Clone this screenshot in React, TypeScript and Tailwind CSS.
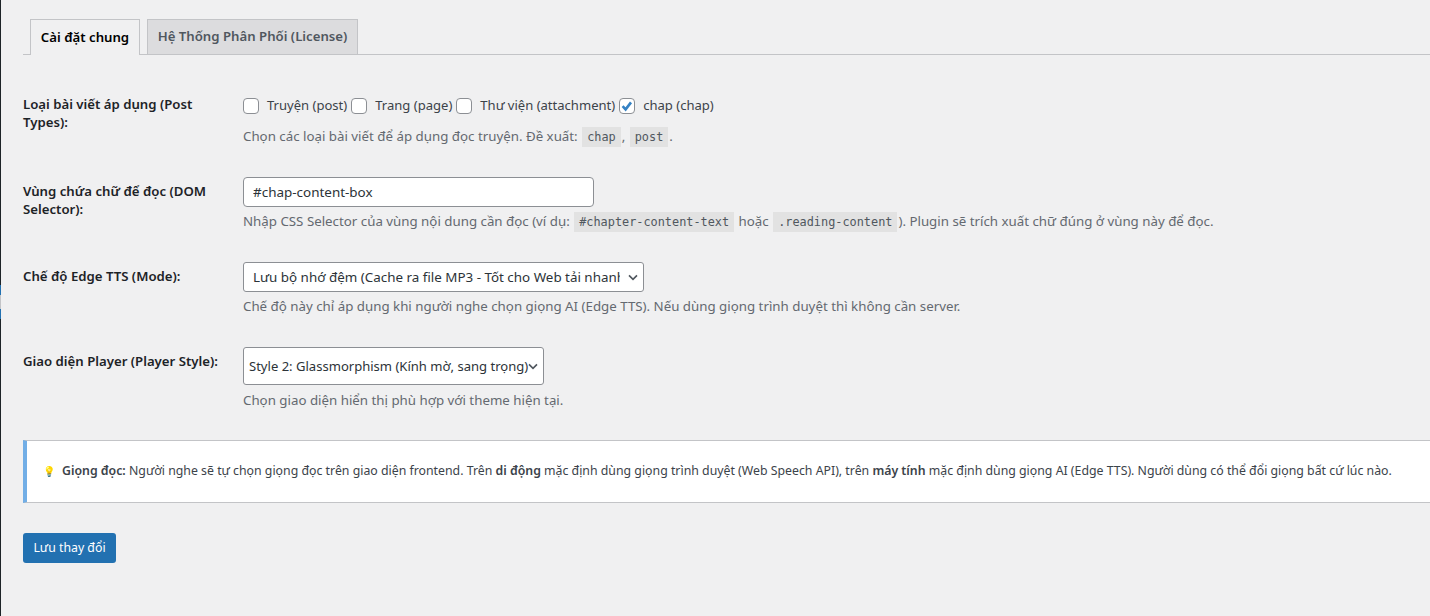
const codeClass =
  'bg-[#e2e2e2] px-[5px] py-[3px] mx-px font-["DejaVu_Sans_Mono",monospace] text-[11.86px] text-[#50575e]';

function Code({ children }: { children: string }) {
  return <code className={codeClass}>{children}</code>;
}

function Check({ label, checked }: { label: string; checked?: boolean }) {
  return (
    <label className="inline-flex items-center">
      <span className="relative mr-[8px] block h-4 w-4 rounded-[4px] border border-[#8c8f94] bg-white">
        {checked && (
          <svg viewBox="0 0 16 16" className="absolute left-[-1px] top-[-1px] h-4 w-4">
            <path d="M3.6 8.2l3 3.2 5.4-7" fill="none" stroke="#3582c4" strokeWidth="2.6" />
          </svg>
        )}
      </span>
      {label}
    </label>
  );
}

function Chevron() {
  return (
    <svg viewBox="0 0 20 20" className="pointer-events-none absolute right-[3px] top-1/2 h-4 w-4 -translate-y-1/2">
      <path d="M5 8l5 5 5-5" fill="none" stroke="#50575e" strokeWidth="2" />
    </svg>
  );
}

function Row({
  label,
  help,
  children,
  rowClass,
  labelClass,
}: {
  label: string;
  help: React.ReactNode;
  children: React.ReactNode;
  rowClass: string;
  labelClass: string;
}) {
  return (
    <div className={`flex ${rowClass}`}>
      <div className={`w-[220px] pr-4 text-[13.2px] leading-[18.2px] font-semibold text-[#1d2327] ${labelClass}`}>
        {label}
      </div>
      <div className="flex-1">
        {children}
        <p className="text-[13.3px] leading-[18px] text-[#646970] whitespace-nowrap">{help}</p>
      </div>
    </div>
  );
}

export default function App() {
  return (
    <div className='flex h-[616px] w-[1430px] overflow-hidden bg-[#f0f0f1] font-["Noto_Sans",sans-serif] text-[13px] text-[#3c434a]'>
      {/* Admin menu edge */}
      <div className="flex w-px shrink-0 flex-col">
        <div className="h-[285px] bg-[#1d2327]" />
        <div className="h-[10px] bg-[#2271b1]" />
        <div className="h-[14px] bg-[#c3c4c7]" />
        <div className="h-[10px] bg-[#2271b1]" />
        <div className="flex-1 bg-[#1d2327]" />
      </div>

      <div className="min-w-0 flex-1 pl-[22px]">
        {/* Tabs */}
        <div className="flex h-[55px] items-end gap-[7px] border-b border-[#c3c4c7] pl-[7px]">
          <div className="mb-[-1px] flex h-[36px] w-[110px] items-center justify-center border border-b-0 border-[#c3c4c7] bg-[#f0f0f1] text-[13.2px] font-semibold text-black">
            Cài đặt chung
          </div>
          <div className="flex h-[35px] w-[211px] items-center justify-center border border-b-0 border-[#c3c4c7] bg-[#dcdcde] text-[13.2px] font-semibold text-[#50575e]">
            Hệ Thống Phân Phối (License)
          </div>
        </div>

        {/* Settings */}
        <Row
          rowClass="pt-[41px]"
          labelClass="-mt-px"
          label="Loại bài viết áp dụng (Post Types):"
          help={
            <>
              Chọn các loại bài viết để áp dụng đọc truyện. Đề xuất: <Code>chap</Code>, <Code>post</Code>.
            </>
          }
        >
          <div className="mb-[12px] mt-px flex h-[18px] items-center gap-[4px] text-[13.05px]">
            <Check label="Truyện (post)" />
            <Check label="Trang (page)" />
            <Check label="Thư viện (attachment)" />
            <Check label="chap (chap)" checked />
          </div>
        </Row>

        <Row
          rowClass="pt-[31px]"
          labelClass="mt-[5px]"
          label="Vùng chứa chữ để đọc (DOM Selector):"
          help={
            <>
              Nhập CSS Selector của vùng nội dung cần đọc (ví dụ: <Code>#chapter-content-text</Code> hoặc{' '}
              <Code>.reading-content</Code>). Plugin sẽ trích xuất chữ đúng ở vùng này để đọc.
            </>
          }
        >
          <input
            readOnly
            value="#chap-content-box"
            className="mb-[5px] block h-[30px] w-[351px] rounded-[4px] border border-[#8c8f94] bg-white pl-[9px] pr-2 text-[13.45px] text-[#2c3338]"
          />
        </Row>

        <Row
          rowClass="pt-[31px]"
          labelClass="mt-[5px]"
          label="Chế độ Edge TTS (Mode):"
          help="Chế độ này chỉ áp dụng khi người nghe chọn giọng AI (Edge TTS). Nếu dùng giọng trình duyệt thì không cần server."
        >
          <div className="relative mb-[5px] w-[401px]">
            <select className="block h-[30px] w-full appearance-none rounded-[3px] border border-[#8c8f94] bg-white pl-[9px] pr-[23px] text-[13.4px] text-[#2c3338]">
              <option>Lưu bộ nhớ đệm (Cache ra file MP3 - Tốt cho Web tải nhanh)</option>
            </select>
            <Chevron />
          </div>
        </Row>

        <Row
          rowClass="pt-[32px]"
          labelClass="mt-[5px]"
          label="Giao diện Player (Player Style):"
          help="Chọn giao diện hiển thị phù hợp với theme hiện tại."
        >
          <div className="relative mb-[6px] w-[301px]">
            <select className="block h-[38px] w-full appearance-none rounded-[3px] border border-[#8c8f94] bg-white pl-[5px] pr-[14px] pt-px text-[13.05px] text-[#2c3338]">
              <option>Style 2: Glassmorphism (Kính mờ, sang trọng)</option>
            </select>
            <Chevron />
          </div>
        </Row>

        {/* Notice */}
        <div className="mt-[31px] flex h-[63px] items-center whitespace-nowrap border-y border-[#c3c4c7] border-l-4 border-l-[#72aee6] bg-white pl-[16px] text-[12.32px] text-[#3c434a]">
          <span className="mr-[7px] text-[10px]">💡</span>
          <span>
            <strong className="font-semibold">Giọng đọc:</strong> Người nghe sẽ tự chọn giọng đọc trên giao diện frontend. Trên{' '}
            <strong className="font-semibold">di động</strong> mặc định dùng giọng trình duyệt (Web Speech API), trên{' '}
            <strong className="font-semibold">máy tính</strong> mặc định dùng giọng AI (Edge TTS). Người dùng có thể đổi giọng bất cứ lúc nào.
          </span>
        </div>

        <button className="mt-[30px] block h-[30px] w-[93px] rounded-[3px] bg-[#2271b1] text-[12.3px] text-white">
          Lưu thay đổi
        </button>
      </div>
    </div>
  );
}
